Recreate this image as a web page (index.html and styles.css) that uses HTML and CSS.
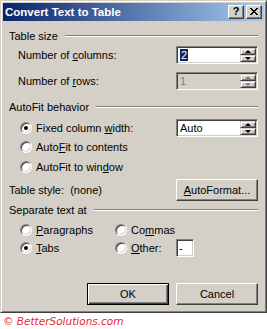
FILE: index.html
```html
<!DOCTYPE html>
<html lang="en">
<head>
    <meta charset="UTF-8">
    <title>Convert Text to Table</title>
    <link rel="stylesheet" href="styles.css">
</head>
<body>
    <div class="window">
        <div class="titlebar">
            <span class="title">Convert Text to Table</span>
            <div class="cap-btns">
                <span class="cap-btn help">?</span>
                <span class="cap-btn">
                    <svg width="8" height="7" viewBox="0 0 8 7">
                        <path d="M0 0h2v1h-2zM6 0h2v1h-2zM1 1h2v1h-2zM5 1h2v1h-2zM2 2h4v1h-4zM3 3h2v1h-2zM2 4h4v1h-4zM1 5h2v1h-2zM5 5h2v1h-2zM0 6h2v1h-2zM6 6h2v1h-2z" fill="#000"/>
                    </svg>
                </span>
            </div>
        </div>
        <div class="content">
            <div class="group-head head-size"><span>Table size</span><span class="rule"></span></div>
            <div class="field-row row-cols">
                <span>Number of <u>c</u>olumns:</span>
                <div class="spin">
                    <span class="value"><span class="sel">2</span></span>
                    <div class="spin-btns"><span class="spin-btn up"></span><span class="spin-btn down"></span></div>
                </div>
            </div>
            <div class="field-row row-rows">
                <span>Number of <u>r</u>ows:</span>
                <div class="spin disabled">
                    <span class="value">1</span>
                    <div class="spin-btns"><span class="spin-btn up"></span><span class="spin-btn down"></span></div>
                </div>
            </div>

            <div class="group-head head-fit"><span>AutoFit behavior</span><span class="rule"></span></div>
            <div class="radio-row fit-1">
                <span class="radio checked"></span>
                <span class="grow">Fixed column <u>w</u>idth:</span>
                <div class="spin">
                    <span class="value">Auto</span>
                    <div class="spin-btns"><span class="spin-btn up"></span><span class="spin-btn down"></span></div>
                </div>
            </div>
            <div class="radio-row fit-2">
                <span class="radio"></span>
                <span>Auto<u>F</u>it to contents</span>
            </div>
            <div class="radio-row fit-3">
                <span class="radio"></span>
                <span>AutoFit to win<u>d</u>ow</span>
            </div>

            <div class="style-row">
                <span>Table style:&nbsp; (none)</span>
                <span class="button"><u>A</u>utoFormat...</span>
            </div>

            <div class="group-head head-sep"><span>Separate text at</span><span class="rule"></span></div>
            <div class="sep-grid">
                <div class="radio-row"><span class="radio"></span><span><u>P</u>aragraphs</span></div>
                <div class="radio-row"><span class="radio"></span><span>Co<u>m</u>mas</span></div>
                <div class="radio-row"><span class="radio checked"></span><span><u>T</u>abs</span></div>
                <div class="radio-row">
                    <span class="radio"></span><span class="grow"><u>O</u>ther:</span>
                    <span class="other-box">-</span>
                </div>
            </div>

            <div class="actions">
                <span class="button default">OK</span>
                <span class="button">Cancel</span>
            </div>
        </div>
    </div>
    <div class="credit">&copy; BetterSolutions.com</div>
</body>
</html>
```

FILE: styles.css
```css
*{
    box-sizing: border-box;
}
html, body{
    margin: 0;
    padding: 0;
    background: #fff;
}
body{
    width: 267px;
    font-family: "Liberation Sans", Arial, sans-serif;
    font-size: 11px;
    color: #000;
}
u{
    text-underline-offset: 1px;
}

.window{
    width: 267px;
    height: 313px;
    padding: 2px;
    background: #d4d0c8;
    border: 1px solid;
    border-color: #d4d0c8 #404040 #404040 #d4d0c8;
    box-shadow: inset 1px 1px #fff, inset -1px -1px #808080;
    display: flex;
    flex-direction: column;
}

.titlebar{
    height: 18px;
    padding: 0 2px;
    display: flex;
    align-items: center;
    background: linear-gradient(to right, #0a246a, #a6caf0);

    .title{
        flex: 1;
        color: #fff;
        font-weight: bold;
        font-size: 11.5px;
    }
}
.cap-btns{
    display: flex;
    gap: 2px;

    .cap-btn{
        width: 16px;
        height: 14px;
        display: flex;
        justify-content: center;
        align-items: center;
        background: #d4d0c8;
        border: 1px solid;
        border-color: #fff #404040 #404040 #fff;
        box-shadow: inset -1px -1px #808080;
        font-weight: bold;
        font-size: 11px;
        line-height: 1;
        padding-bottom: 1px;
    }
}

.content{
    flex: 1;
    padding: 8px 6px 5px 6px;
    display: flex;
    flex-direction: column;
}

.group-head{
    height: 14px;
    display: flex;
    align-items: center;

    .rule{
        flex: 1;
        height: 2px;
        margin-left: 7px;
        border-top: 1px solid #808080;
        border-bottom: 1px solid #fff;
    }
}
.head-fit{
    margin-top: 9px;
}
.head-sep{
    margin-top: 2px;
}

.field-row{
    height: 20px;
    padding-left: 9px;
    display: flex;
    justify-content: space-between;
    align-items: center;
}
.row-cols{
    margin-top: 2px;
}
.row-rows{
    margin-top: 6px;
}

.spin{
    width: 82px;
    height: 18px;
    display: flex;
    background: #fff;
    border: 1px solid;
    border-color: #808080 #fff #fff #808080;
    box-shadow: inset 1px 1px #404040, inset -1px -1px #d4d0c8;
    padding: 1px;

    .value{
        flex: 1;
        padding-left: 2px;
        display: flex;
        align-items: center;
    }
    .sel{
        background: #0a246a;
        color: #fff;
        padding: 0 1px;
    }
}
.spin-btns{
    width: 16px;
    display: flex;
    flex-direction: column;

    .spin-btn{
        flex: 1;
        display: flex;
        justify-content: center;
        align-items: center;
        background: #d4d0c8;
        border: 1px solid;
        border-color: #d4d0c8 #404040 #404040 #d4d0c8;
        box-shadow: inset 1px 1px #fff, inset -1px -1px #808080;
    }
    .spin-btn::after{
        content: "";
        border-left: 3px solid transparent;
        border-right: 3px solid transparent;
    }
    .up::after{
        border-bottom: 3px solid #000;
    }
    .down::after{
        border-top: 3px solid #000;
    }
}
.spin.disabled{
    background: #d4d0c8;
    color: #808080;

    .up::after{
        border-bottom-color: #808080;
    }
    .down::after{
        border-top-color: #808080;
    }
}

.radio-row{
    height: 18px;
    padding-left: 11px;
    display: flex;
    align-items: center;

    .grow{
        flex: 1;
    }
}
.fit-1{
    height: 20px;
    margin-top: 4px;
}
.fit-3{
    margin-top: 2px;
}

.radio{
    width: 12px;
    height: 12px;
    margin-right: 4px;
    border-radius: 50%;
    background: #fff;
    border: 1px solid;
    border-color: #808080 #fff #fff #808080;
    box-shadow: inset 1px 1px #404040, inset -1px -1px #d4d0c8;
    display: flex;
    justify-content: center;
    align-items: center;
}
.radio.checked::after{
    content: "";
    width: 4px;
    height: 4px;
    border-radius: 50%;
    background: #000;
}

.style-row{
    height: 22px;
    margin-top: 3px;
    display: flex;
    justify-content: space-between;
    align-items: center;
}

.button{
    width: 82px;
    height: 22px;
    display: flex;
    justify-content: center;
    align-items: center;
    background: #d4d0c8;
    border: 1px solid;
    border-color: #fff #404040 #404040 #fff;
    box-shadow: inset -1px -1px #808080;
}
.button.default{
    border-color: #000;
    box-shadow: inset 1px 1px #fff, inset -1px -1px #404040, inset -2px -2px #808080;
}

.sep-grid{
    margin-top: 4px;
    display: grid;
    grid-template-columns: 106px 1fr;

    .radio-row:nth-child(even){
        padding-left: 0;
    }
}
.other-box{
    width: 18px;
    height: 18px;
    padding-left: 2px;
    display: flex;
    align-items: center;
    background: #fff;
    border: 1px solid;
    border-color: #808080 #fff #fff #808080;
    box-shadow: inset 1px 1px #404040, inset -1px -1px #d4d0c8;
    margin-right: 64px;
}

.actions{
    margin-top: auto;
    display: flex;
    justify-content: flex-end;
    gap: 7px;
}

.credit{
    height: 16px;
    padding-left: 3px;
    display: flex;
    align-items: center;
    color: #e8282c;
    font-family: "DejaVu Sans", sans-serif;
    font-style: italic;
    font-size: 10.5px;
}
```
